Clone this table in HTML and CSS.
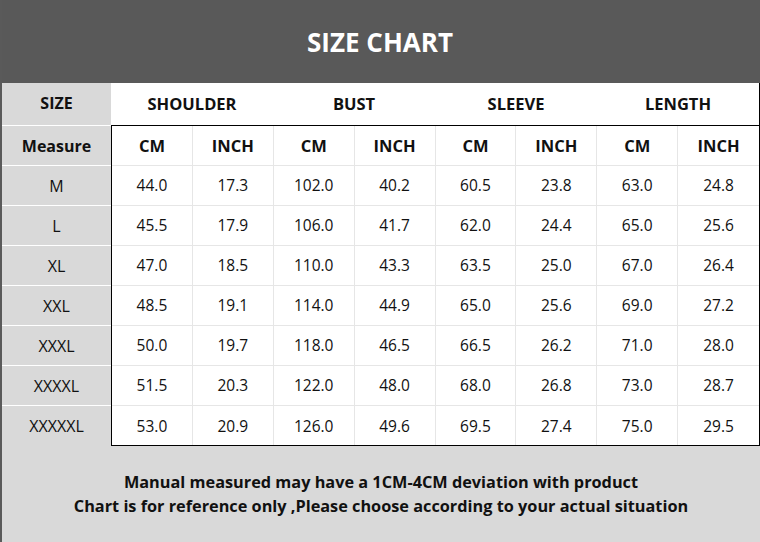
FILE: index.html
```html
<!DOCTYPE html>
<html>
<head>
<meta charset="utf-8">
<link rel="stylesheet" href="styles.css">
</head>
<body>
<div class="page">
  <div class="header"><h1 class="title">SIZE CHART</h1></div>
  <div class="chart">
    <div class="sizes">
      <div class="scell head first">SIZE</div>
      <div class="scell head">Measure</div>
      <div class="scell">M</div>
      <div class="scell">L</div>
      <div class="scell">XL</div>
      <div class="scell">XXL</div>
      <div class="scell">XXXL</div>
      <div class="scell">XXXXL</div>
      <div class="scell last">XXXXXL</div>
    </div>
    <div class="data">
      <div class="groups">
        <div class="group">SHOULDER</div>
        <div class="group">BUST</div>
        <div class="group">SLEEVE</div>
        <div class="group">LENGTH</div>
      </div>
      <div class="grid">
        <div class="cell head">CM</div><div class="cell head">INCH</div><div class="cell head">CM</div><div class="cell head">INCH</div><div class="cell head">CM</div><div class="cell head">INCH</div><div class="cell head">CM</div><div class="cell head">INCH</div>
        <div class="cell">44.0</div><div class="cell">17.3</div><div class="cell">102.0</div><div class="cell">40.2</div><div class="cell">60.5</div><div class="cell">23.8</div><div class="cell">63.0</div><div class="cell">24.8</div>
        <div class="cell">45.5</div><div class="cell">17.9</div><div class="cell">106.0</div><div class="cell">41.7</div><div class="cell">62.0</div><div class="cell">24.4</div><div class="cell">65.0</div><div class="cell">25.6</div>
        <div class="cell">47.0</div><div class="cell">18.5</div><div class="cell">110.0</div><div class="cell">43.3</div><div class="cell">63.5</div><div class="cell">25.0</div><div class="cell">67.0</div><div class="cell">26.4</div>
        <div class="cell">48.5</div><div class="cell">19.1</div><div class="cell">114.0</div><div class="cell">44.9</div><div class="cell">65.0</div><div class="cell">25.6</div><div class="cell">69.0</div><div class="cell">27.2</div>
        <div class="cell">50.0</div><div class="cell">19.7</div><div class="cell">118.0</div><div class="cell">46.5</div><div class="cell">66.5</div><div class="cell">26.2</div><div class="cell">71.0</div><div class="cell">28.0</div>
        <div class="cell">51.5</div><div class="cell">20.3</div><div class="cell">122.0</div><div class="cell">48.0</div><div class="cell">68.0</div><div class="cell">26.8</div><div class="cell">73.0</div><div class="cell">28.7</div>
        <div class="cell lastrow">53.0</div><div class="cell lastrow">20.9</div><div class="cell lastrow">126.0</div><div class="cell lastrow">49.6</div><div class="cell lastrow">69.5</div><div class="cell lastrow">27.4</div><div class="cell lastrow">75.0</div><div class="cell lastrow">29.5</div>
      </div>
    </div>
  </div>
  <div class="footer">
    <p class="note">Manual measured may have a 1CM-4CM deviation with product</p>
    <p class="note">Chart is for reference only ,Please choose according to your actual situation</p>
  </div>
</div>
</body>
</html>
```
FILE: styles.css
```css
* { box-sizing: border-box; }
html, body { margin: 0; padding: 0; }
body {
  font-family: "Open Sans", "Noto Sans", sans-serif;
  color: #111;
  background: #d9d9d9;
}
.page {
  width: 760px;
  height: 542px;
  background: #d9d9d9;
  border-left: 2px solid #5a5a5a;
  display: flex;
  flex-direction: column;
  overflow: hidden;
}
.header {
  height: 83px;
  background: #595959;
  display: flex;
  align-items: center;
  justify-content: center;
  margin-left: -2px;
}
.title {
  margin: 0;
  color: #fff;
  font-size: 26px;
  font-weight: 700;
  letter-spacing: 0;
}
.chart {
  display: flex;
}
.sizes {
  width: 109px;
  display: flex;
  flex-direction: column;
}
.scell {
  height: 40px;
  border-bottom: 1px solid #fff;
  display: flex;
  align-items: center;
  justify-content: center;
  font-size: 16px;
}
.scell.first { height: 43px; padding-bottom: 2px; }
.scell.last { border-bottom: none; height: 39px; }
.scell.head { font-weight: 700; font-size: 16px; }
.data {
  flex: 1;
  background: #fff;
  border-right: 1px solid #000;
}
.groups {
  height: 42px;
  display: grid;
  grid-template-columns: repeat(4, 1fr);
}
.group {
  display: flex;
  align-items: center;
  justify-content: center;
  font-weight: 700;
  font-size: 16.5px;
  padding-bottom: 2px;
}
.grid {
  display: grid;
  grid-template-columns: repeat(8, 1fr);
  border-top: 1px solid #000;
  border-left: 1px solid #000;
  border-bottom: 1px solid #000;
}
.cell {
  height: 40px;
  border-right: 1px solid #e6e6e6;
  border-bottom: 1px solid #e6e6e6;
  display: flex;
  align-items: center;
  justify-content: center;
  font-size: 15.5px;
  padding-bottom: 1px;
}
.cell:nth-child(8n) { border-right: none; }
.cell.lastrow { border-bottom: none; height: 39px; padding-bottom: 0; }
.cell.head { font-weight: 700; font-size: 16.5px; }
.footer {
  flex: 1;
  display: flex;
  flex-direction: column;
  justify-content: center;
  align-items: center;
  padding-bottom: 1px;
}
.note {
  margin: 0;
  font-weight: 700;
  font-size: 16.3px;
  line-height: 24px;
  text-align: center;
}
```
